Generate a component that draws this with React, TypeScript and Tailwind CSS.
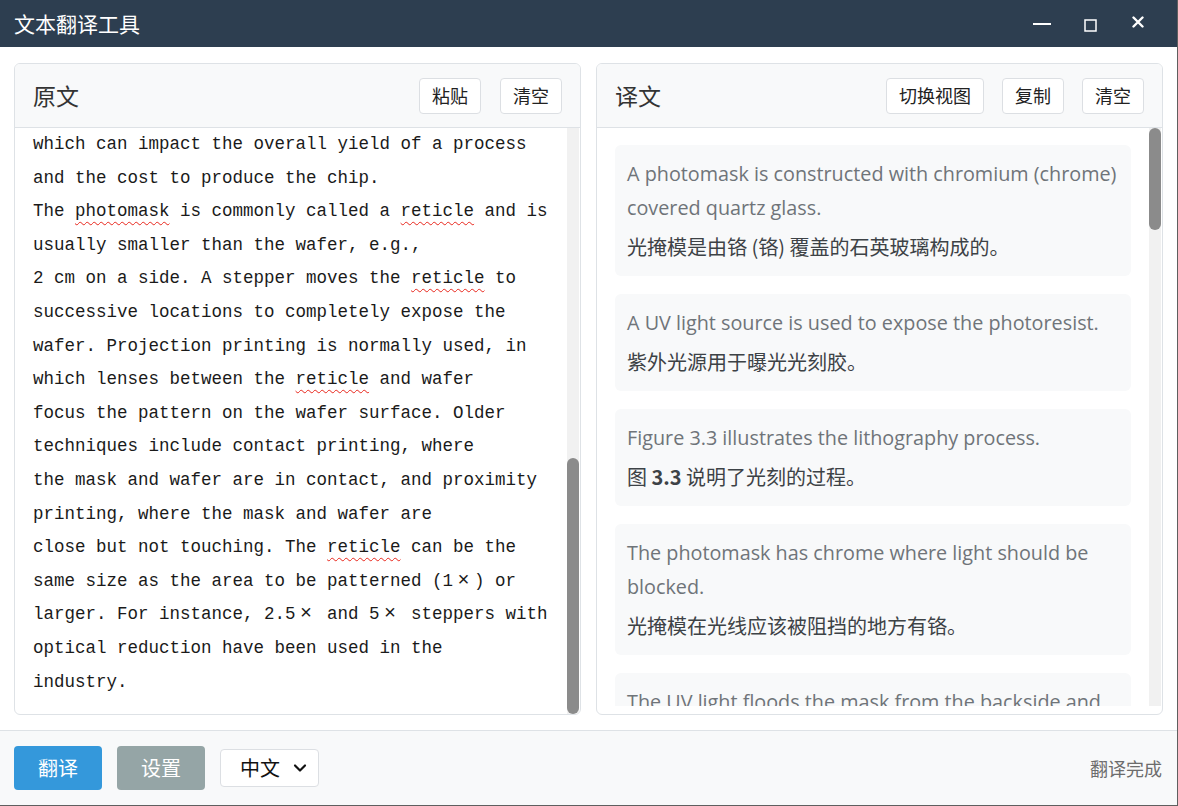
import React from "react";

const cjk = { fontFamily: '"Noto Sans CJK SC", "Noto Sans", sans-serif' };

const sourceLines: React.ReactNode[] = [
  "which can impact the overall yield of a process",
  "and the cost to produce the chip.",
  <>
    The <Typo>photomask</Typo> is commonly called a <Typo>reticle</Typo> and is
  </>,
  "usually smaller than the wafer, e.g.,",
  <>
    2 cm on a side. A stepper moves the <Typo>reticle</Typo> to
  </>,
  "successive locations to completely expose the",
  "wafer. Projection printing is normally used, in",
  <>
    which lenses between the <Typo>reticle</Typo> and wafer
  </>,
  "focus the pattern on the wafer surface. Older",
  "techniques include contact printing, where",
  "the mask and wafer are in contact, and proximity",
  "printing, where the mask and wafer are",
  <>
    close but not touching. The <Typo>reticle</Typo> can be the
  </>,
  <>
    same size as the area to be patterned (1<Times />) or
  </>,
  <>
    larger. For instance, 2.5<Times /> and 5<Times /> steppers with
  </>,
  "optical reduction have been used in the",
  "industry.",
];

const pairs = [
  {
    en: "A photomask is constructed with chromium (chrome) covered quartz glass.",
    zh: <>光掩模是由铬 (铬) 覆盖的石英玻璃构成的。</>,
  },
  {
    en: "A UV light source is used to expose the photoresist.",
    zh: <>紫外光源用于曝光光刻胶。</>,
  },
  {
    en: "Figure 3.3 illustrates the lithography process.",
    zh: (
      <>
        图 <span className="font-bold">3.3</span> 说明了光刻的过程。
      </>
    ),
  },
  {
    en: "The photomask has chrome where light should be blocked.",
    zh: <>光掩模在光线应该被阻挡的地方有铬。</>,
  },
  {
    en: "The UV light floods the mask from the backside and passes through the clear quartz.",
    zh: <>紫外光从背面照射掩模并穿过透明的石英。</>,
  },
];

function Typo({ children }: { children: React.ReactNode }) {
  return (
    <span className="underline decoration-wavy decoration-[#e8261c] decoration-1 underline-offset-[5px]">
      {children}
    </span>
  );
}

function Times() {
  return <span className="inline-block w-[21px] text-center text-[20px] leading-none font-light">×</span>;
}

function HeaderButton({ label }: { label: string }) {
  return (
    <button
      className="h-9 px-[12px] rounded bg-white border border-[#dcdfe3] text-[18px] text-[#222]"
      style={cjk}
    >
      {label}
    </button>
  );
}

function Scrollbar({ thumbTop, thumbHeight }: { thumbTop: number; thumbHeight: number }) {
  return (
    <div className="w-3 shrink-0 bg-[#f1f1f1] flex flex-col">
      <div style={{ height: thumbTop }} />
      <div className="w-3 rounded-full bg-[#8b8b8b]" style={{ height: thumbHeight }} />
    </div>
  );
}

export default function App() {
  return (
    <div className="w-[1178px] h-[806px] flex flex-col bg-white border-r border-b border-[#5f5f5f] overflow-hidden" style={cjk}>
      {/* Title bar */}
      <div className="h-[47px] shrink-0 bg-[#2d3e50] flex items-center justify-between pl-[14px] pr-[15px]">
        <span className="text-white text-[21px]">文本翻译工具</span>
        <div className="flex items-center">
          <div className="w-12 h-[47px] flex items-center justify-center">
            <svg width="18" height="4" viewBox="0 0 18 4">
              <rect x="0" y="1" width="18" height="2" fill="#fff" />
            </svg>
          </div>
          <div className="w-12 h-[47px] flex items-center justify-center pt-[4px]">
            <svg width="13" height="13" viewBox="0 0 13 13">
              <rect x="1" y="1" width="11" height="11" fill="none" stroke="#fff" strokeWidth="1.5" />
            </svg>
          </div>
          <div className="w-12 h-[47px] flex items-center justify-center pb-[4px]">
            <svg width="12" height="12" viewBox="0 0 12 12">
              <path d="M1.5 1.5 L10.5 10.5 M10.5 1.5 L1.5 10.5" stroke="#fff" strokeWidth="2.4" strokeLinecap="round" />
            </svg>
          </div>
        </div>
      </div>

      {/* Panels */}
      <div className="flex-1 min-h-0 flex gap-[15px] px-[14px] pt-[16px] pb-[15px]">
        {/* Source */}
        <div className="flex-1 flex flex-col rounded-md border border-[#dee2e6] overflow-hidden">
          <div className="h-[64px] shrink-0 bg-[#f8f9fa] border-b border-[#dee2e6] flex items-center justify-between pl-[18px] pr-[18px]">
            <span className="text-[23px] text-[#333]">原文</span>
            <div className="flex gap-[19px]">
              <HeaderButton label="粘贴" />
              <HeaderButton label="清空" />
            </div>
          </div>
          <div className="flex-1 min-h-0 flex">
            <div
              className="flex-1 pl-[18px] text-[17.5px] leading-[33.6px] text-[#1a1a1a] overflow-hidden"
              style={{ fontFamily: '"Liberation Mono", "Noto Sans CJK SC", monospace' }}
            >
              {sourceLines.map((line, i) => (
                <div key={i} className="whitespace-pre h-[33.6px]">
                  {line}
                </div>
              ))}
            </div>
            <div className="pr-[1px] flex">
              <Scrollbar thumbTop={331} thumbHeight={256} />
            </div>
          </div>
        </div>

        {/* Translation */}
        <div className="flex-1 flex flex-col rounded-md border border-[#dee2e6] overflow-hidden">
          <div className="h-[64px] shrink-0 bg-[#f8f9fa] border-b border-[#dee2e6] flex items-center justify-between pl-[18px] pr-[18px]">
            <span className="text-[23px] text-[#333]">译文</span>
            <div className="flex gap-[18px]">
              <HeaderButton label="切换视图" />
              <HeaderButton label="复制" />
              <HeaderButton label="清空" />
            </div>
          </div>
          <div className="flex-1 min-h-0 flex pb-[8px]">
            <div className="flex-1 overflow-hidden pl-[18px] pr-[18px] pt-[17px] flex flex-col gap-[18px]">
              {pairs.map((p, i) => (
                <div key={i} className="shrink-0 bg-[#f8f9fa] rounded-md px-[12px] pt-[12px] pb-[12px]">
                  <div
                    className="text-[19.8px] leading-[34px] text-[#6f7479]"
                    style={{ fontFamily: '"Open Sans", "Noto Sans CJK SC", sans-serif' }}
                  >
                    {p.en}
                  </div>
                  <div className="mt-[5px] text-[20px] leading-[34px] text-[#3d4246]">{p.zh}</div>
                </div>
              ))}
            </div>
            <div className="pr-[1px] flex">
              <Scrollbar thumbTop={0} thumbHeight={102} />
            </div>
          </div>
        </div>
      </div>

      {/* Footer */}
      <div className="h-[75px] shrink-0 bg-[#f8f9fa] border-t border-[#dee2e6] flex items-center justify-between pl-[14px] pr-[15px]">
        <div className="flex items-center gap-[15px]">
          <button className="w-[88px] h-[44px] rounded bg-[#3498db] text-white text-[20px]">翻译</button>
          <button className="w-[88px] h-[44px] rounded bg-[#95a5a6] text-white text-[20px]">设置</button>
          <div className="w-[99px] h-[38px] rounded bg-white border border-[#dcdfe3] flex items-center justify-between pl-[19px] pr-[11px]">
            <span className="text-[20px] text-[#111]">中文</span>
            <svg width="14" height="10" viewBox="0 0 14 10">
              <path d="M2 2.5 L7 7.5 L12 2.5" fill="none" stroke="#111" strokeWidth="2.2" strokeLinecap="round" strokeLinejoin="round" />
            </svg>
          </div>
        </div>
        <span className="text-[18px] text-[#6c6c6c]">翻译完成</span>
      </div>
    </div>
  );
}
